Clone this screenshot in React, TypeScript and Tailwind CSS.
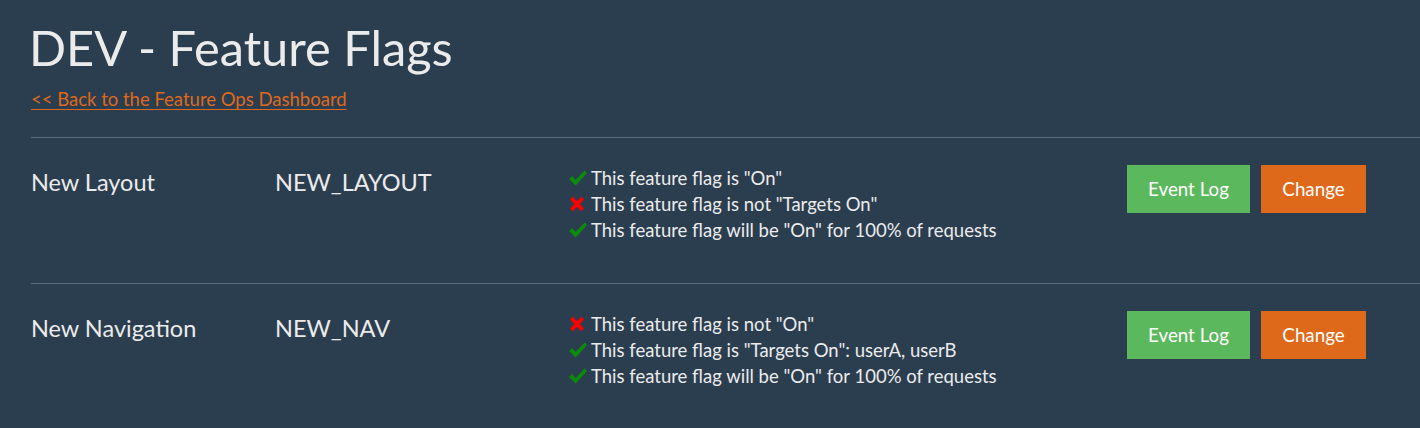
import React from "react";

function Check() {
  return (
    <svg width="20" height="18" viewBox="0 0 20 18" className="shrink-0">
      <path d="M1 10 L4.2 7 L7.6 11 L16.6 1.5 L19 4 L7.7 16.5 Z" fill="#0b8a0b" />
    </svg>
  );
}

function Cross() {
  return (
    <svg width="20" height="18" viewBox="0 0 20 18" className="shrink-0">
      <path d="M2 4.5 L4.8 1.8 L9 6.2 L13.2 1.8 L16 4.5 L11.7 9 L16 13.5 L13.2 16.2 L9 11.8 L4.8 16.2 L2 13.5 L6.3 9 Z" fill="#ff0000" />
    </svg>
  );
}

type Msg = { ok: boolean; text: string };

const rows: { name: string; key: string; msgs: Msg[] }[] = [
  {
    name: "New Layout",
    key: "NEW_LAYOUT",
    msgs: [
      { ok: true, text: 'This feature flag is "On"' },
      { ok: false, text: 'This feature flag is not "Targets On"' },
      { ok: true, text: 'This feature flag will be "On" for 100% of requests' },
    ],
  },
  {
    name: "New Navigation",
    key: "NEW_NAV",
    msgs: [
      { ok: false, text: 'This feature flag is not "On"' },
      { ok: true, text: 'This feature flag is "Targets On": userA, userB' },
      { ok: true, text: 'This feature flag will be "On" for 100% of requests' },
    ],
  },
];

export default function App() {
  return (
    <div
      className="min-h-[428px] w-full bg-[#2b3e50] text-[#ebebeb] pl-[31px]"
      style={{ fontFamily: "Lato, 'Noto Sans', sans-serif" }}
    >
      <h1 className="pt-[15px] text-[48.75px] leading-[64px] font-normal text-[#ebebeb] -ml-[2px]">
        DEV - Feature Flags
      </h1>
      <a href="#" className="block mt-[7px] text-[18.5px] leading-[26px] text-[#df691a] underline underline-offset-[3px]">
        &lt;&lt; Back to the Feature Ops Dashboard
      </a>
      <div className="mt-[25px]">
        {rows.map((r) => (
          <div key={r.key} className="border-t border-[#596a7b] h-[146px] pt-[27px] flex">
            <div className="w-[244px] text-[23.5px] leading-[32px] mt-[1px]">{r.name}</div>
            <div className="w-[293px] text-[23.5px] leading-[32px] mt-[1px]">{r.key}</div>
            <div className="w-[559px] text-[18.5px] leading-[26px]">
              {r.msgs.map((m, i) => (
                <div key={i} className="flex items-center gap-[3px]">
                  {m.ok ? <Check /> : <Cross />}
                  <span>{m.text}</span>
                </div>
              ))}
            </div>
            <div className="flex gap-[11px] items-start">
              <button className="h-[48px] w-[123px] bg-[#5cb85c] text-white text-[18.75px]">Event Log</button>
              <button className="h-[48px] w-[105px] bg-[#df691a] text-white text-[18.75px]">Change</button>
            </div>
          </div>
        ))}
      </div>
    </div>
  );
}
